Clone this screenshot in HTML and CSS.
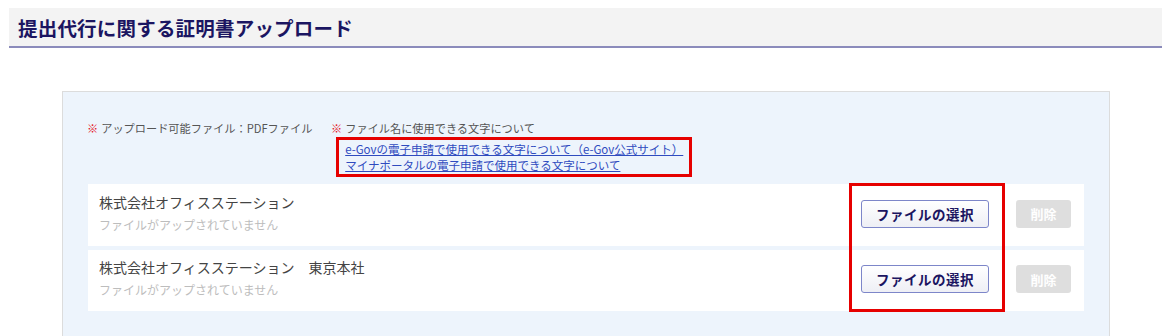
FILE: index.html
```html
<!DOCTYPE html>
<html lang="ja">
<head>
    <meta charset="UTF-8">
    <meta name="viewport" content="width=device-width, initial-scale=1.0">
    <title>提出代行に関する証明書アップロード</title>
    <link rel="stylesheet" href="styles.css">
</head>
<body>
    <header class="page-head">
        <h1>提出代行に関する証明書アップロード</h1>
    </header>
    <main class="panel">
        <div class="notes">
            <p class="note"><span class="mark">※</span>アップロード可能ファイル：PDFファイル</p>
            <div class="note">
                <span class="mark">※</span>
                <div>
                    <p>ファイル名に使用できる文字について</p>
                    <ul class="links">
                        <li><a href="#">e-Govの電子申請で使用できる文字について（e-Gov公式サイト）</a></li>
                        <li><a href="#">マイナポータルの電子申請で使用できる文字について</a></li>
                    </ul>
                </div>
            </div>
        </div>
        <div class="uploads">
            <div class="row">
                <div class="info">
                    <p class="name">株式会社オフィスステーション</p>
                    <p class="status">ファイルがアップされていません</p>
                </div>
                <button class="btn-select" type="button">ファイルの選択</button>
                <button class="btn-delete" type="button" disabled>削除</button>
            </div>
            <div class="row">
                <div class="info">
                    <p class="name">株式会社オフィスステーション　東京本社</p>
                    <p class="status">ファイルがアップされていません</p>
                </div>
                <button class="btn-select" type="button">ファイルの選択</button>
                <button class="btn-delete" type="button" disabled>削除</button>
            </div>
            <div class="highlight"></div>
        </div>
    </main>
</body>
</html>
```

FILE: styles.css
```css
/* General */
body {
    font-family: "Noto Sans CJK JP", "Noto Sans", sans-serif;
    margin: 8px 10px 0 9px;
    background: #fff;
    color: #444;
}

p, ul, h1 {
    margin: 0;
    padding: 0;
}

/* Page title */
.page-head {
    background: #f3f3f3;
    border-bottom: 2px solid #8b8bbb;
    height: 38px;
    display: flex;
    align-items: center;
    padding-left: 9px;
}

.page-head h1 {
    font-size: 19.5px;
    font-weight: bold;
    color: #1b1561;
    letter-spacing: 0.2px;
}

/* Panel */
.panel {
    display: block;
    margin: 43px 52px 0 53px;
    background: #edf4fc;
    border: 1px solid #dcdcdc;
    border-bottom: none;
    padding: 28px 24px 25px 24px;
}

.notes {
    display: flex;
    font-size: 11.2px;
    line-height: 16px;
    color: #555;
}

.note {
    display: flex;
}

.note:first-child {
    width: 244px;
}

.mark {
    color: #e5141e;
    margin-right: 3px;
}

.links {
    list-style: none;
    display: inline-block;
    border: 3px solid #e60000;
    margin: 1px 0 0 -9px;
    padding: 1px 6px 1px 6px;
    font-size: 11.5px;
}

.links a {
    color: #2f4bbf;
}

/* Upload rows */
.uploads {
    position: relative;
    margin: 7px 1px 0 1px;
    display: flex;
    flex-direction: column;
    gap: 4px;
}

.row {
    background: #fff;
    height: 62px;
    display: flex;
    align-items: center;
    padding: 0 13px 0 11px;
}

.row + .row {
    height: 61px;
}

.info {
    flex: 1;
    margin-top: -5px;
}

.name {
    font-size: 14px;
    line-height: 24px;
    color: #444;
}

.status {
    font-size: 12px;
    line-height: 22px;
    color: #bdbdbd;
}

.btn-select {
    width: 128px;
    height: 28px;
    margin-top: -3px;
    border: 1px solid #7d86c9;
    border-radius: 3px;
    background: linear-gradient(#ffffff, #eeeff5);
    color: #1b1561;
    font-family: inherit;
    font-size: 13.5px;
    font-weight: bold;
    letter-spacing: 0.5px;
    padding: 0;
}

.btn-delete {
    width: 55px;
    height: 28px;
    margin: -3px 0 0 27px;
    border: none;
    border-radius: 3px;
    background: #dedede;
    color: #fff;
    font-family: inherit;
    font-size: 13px;
    font-weight: bold;
    padding: 0;
}

/* Annotation box round the select buttons */
.highlight {
    position: absolute;
    left: 761px;
    top: -1px;
    width: 150px;
    height: 123px;
    border: 3px solid #e60000;
}
```
